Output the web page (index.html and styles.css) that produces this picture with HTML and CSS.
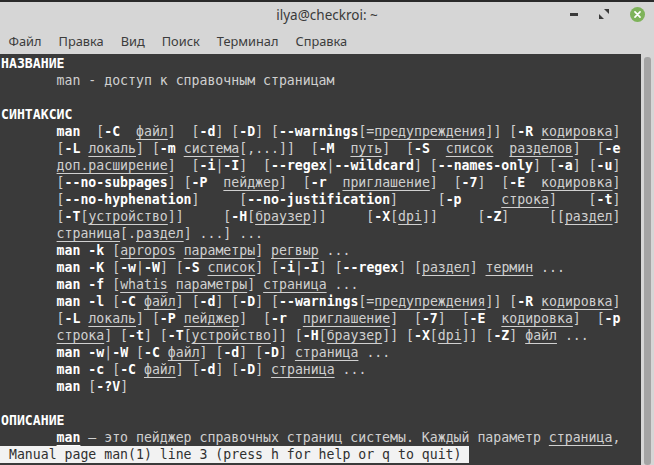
FILE: index.html
```html
<!DOCTYPE html>
<html lang="ru">
<head>
  <meta charset="UTF-8">
  <meta name="viewport" content="width=device-width, initial-scale=1.0">
  <title>ilya@checkroi: ~</title>
  <link rel="stylesheet" href="styles.css">
</head>
<body>

  <div class="window">
    <!-- Title bar -->
    <div class="titlebar">
      <span class="title">ilya@checkroi: ~</span>
      <div class="controls">
        <span class="btn-min"></span>
        <svg class="btn-max" width="10" height="10" viewBox="0 0 10 10">
          <path d="M5 0 L10 0 L10 5 Z" fill="#3a3a3a"/>
          <path d="M0 5 L0 10 L5 10 Z" fill="#3a3a3a"/>
        </svg>
        <svg class="btn-close" width="15" height="15" viewBox="0 0 16 16">
          <circle cx="8" cy="8" r="8" fill="#7eb35a"/>
          <path d="M5.3 5.3 L10.7 10.7 M10.7 5.3 L5.3 10.7" stroke="#ffffff" stroke-width="1.8" stroke-linecap="round"/>
        </svg>
      </div>
    </div>

    <!-- Menu bar -->
    <div class="menubar">
      <span>Файл</span>
      <span>Правка</span>
      <span>Вид</span>
      <span>Поиск</span>
      <span>Терминал</span>
      <span>Справка</span>
    </div>

    <!-- Terminal -->
    <div class="terminal">
<pre class="screen">
<b>НАЗВАНИЕ</b>
       man - доступ к справочным страницам

<b>СИНТАКСИС</b>
       <b>man</b>  [<b>-C</b>  <u>файл</u>]  [<b>-d</b>] [<b>-D</b>] [<b>--warnings</b>[=<u>предупреждения</u>]] [<b>-R</b> <u>кодировка</u>]
       [<b>-L</b> <u>локаль</u>] [<b>-m</b> <u>система</u>[,...]]  [<b>-M</b>  <u>путь</u>]  [<b>-S</b>  <u>список</u>  <u>разделов</u>]  [<b>-e</b>
       <u>доп.расширение</u>]  [<b>-i</b>|<b>-I</b>]  [<b>--regex</b>|<b>--wildcard</b>] [<b>--names-only</b>] [<b>-a</b>] [<b>-u</b>]
       [<b>--no-subpages</b>] [<b>-P</b>  <u>пейджер</u>]  [<b>-r</b>  <u>приглашение</u>]  [<b>-7</b>]  [<b>-E</b>  <u>кодировка</u>]
       [<b>--no-hyphenation</b>]     [<b>--no-justification</b>]     [<b>-p</b>     <u>строка</u>]    [<b>-t</b>]
       [<b>-T</b>[<u>устройство</u>]]     [<b>-H</b>[<u>браузер</u>]]     [<b>-X</b>[<u>dpi</u>]]     [<b>-Z</b>]     [[<u>раздел</u>]
       <u>страница</u>[.<u>раздел</u>] ...] ...
       <b>man</b> <b>-k</b> [<u>apropos</u> <u>параметры</u>] <u>регвыр</u> ...
       <b>man</b> <b>-K</b> [<b>-w</b>|<b>-W</b>] [<b>-S</b> <u>список</u>] [<b>-i</b>|<b>-I</b>] [<b>--regex</b>] [<u>раздел</u>] <u>термин</u> ...
       <b>man</b> <b>-f</b> [<u>whatis</u> <u>параметры</u>] <u>страница</u> ...
       <b>man</b> <b>-l</b> [<b>-C</b> <u>файл</u>] [<b>-d</b>] [<b>-D</b>] [<b>--warnings</b>[=<u>предупреждения</u>]] [<b>-R</b> <u>кодировка</u>]
       [<b>-L</b> <u>локаль</u>] [<b>-P</b> <u>пейджер</u>]  [<b>-r</b>  <u>приглашение</u>]  [<b>-7</b>]  [<b>-E</b>  <u>кодировка</u>]  [<b>-p</b>
       <u>строка</u>] [<b>-t</b>] [<b>-T</b>[<u>устройство</u>]] [<b>-H</b>[<u>браузер</u>]] [<b>-X</b>[<u>dpi</u>]] [<b>-Z</b>] <u>файл</u> ...
       <b>man</b> <b>-w</b>|<b>-W</b> [<b>-C</b> <u>файл</u>] [<b>-d</b>] [<b>-D</b>] <u>страница</u> ...
       <b>man</b> <b>-c</b> [<b>-C</b> <u>файл</u>] [<b>-d</b>] [<b>-D</b>] <u>страница</u> ...
       <b>man</b> [<b>-?V</b>]

<b>ОПИСАНИЕ</b>
       <b><u>man</u></b> — это пейджер справочных страниц системы. Каждый параметр <u>страница</u>,
<span class="status"> Manual page man(1) line 3 (press h for help or q to quit) </span></pre>
      <div class="scrollbar">
        <div class="thumb"></div>
      </div>
    </div>
  </div>

</body>
</html>
```

FILE: styles.css
```css
body {
  margin: 0;
  width: 654px;
  height: 465px;
  overflow: hidden;
  background-color: #3a3a3a;
}
.window {
  display: flex;
  flex-direction: column;
  height: 465px;
  background-color: #d6d6d6;
  border-top: 2px solid #2a2a2a;
  box-sizing: border-box;
}
.titlebar {
  position: relative;
  height: 25px;
  display: flex;
  justify-content: center;
  align-items: center;
  font-family: "Noto Sans", sans-serif;
  font-size: 13.5px;
  color: #3a3a3a;
}
.title {
  margin-top: 1px;
}
.controls {
  position: absolute;
  right: 9px;
  top: 4px;
  display: flex;
  align-items: center;
  gap: 21px;
  height: 16px;
}
.btn-min {
  width: 8px;
  height: 3px;
  background-color: #3a3a3a;
}
.btn-max {
  display: block;
}
.btn-close {
  display: block;
}
.menubar {
  height: 27px;
  display: flex;
  align-items: center;
  font-family: "Noto Sans", sans-serif;
  font-size: 12.8px;
  color: #3c3c3c;
}
.menubar span {
  padding: 0 8.5px;
}
.terminal {
  flex: 1;
  display: flex;
  background-color: #3a3a3a;
  overflow: hidden;
}
.screen {
  flex: 1;
  margin: 0;
  padding: 1px 0 0 1px;
  font-family: "DejaVu Sans Mono", monospace;
  font-size: 13.2px;
  line-height: 17px;
  color: #d0d0d0;
  overflow: hidden;
}
.screen b {
  color: #ffffff;
  font-weight: bold;
}
.screen u {
  text-decoration: underline;
  text-underline-offset: 3px;
}
.status {
  display: inline-block;
  background-color: #f2f2f2;
  color: #303030;
  margin-left: -1px;
  padding-left: 1px;
}
.scrollbar {
  width: 13px;
  background-color: #d6d6d6;
  display: flex;
  justify-content: center;
  padding-top: 3px;
}
.thumb {
  width: 7px;
  background-color: #a4a4a4;
  border-radius: 3px;
}
```
